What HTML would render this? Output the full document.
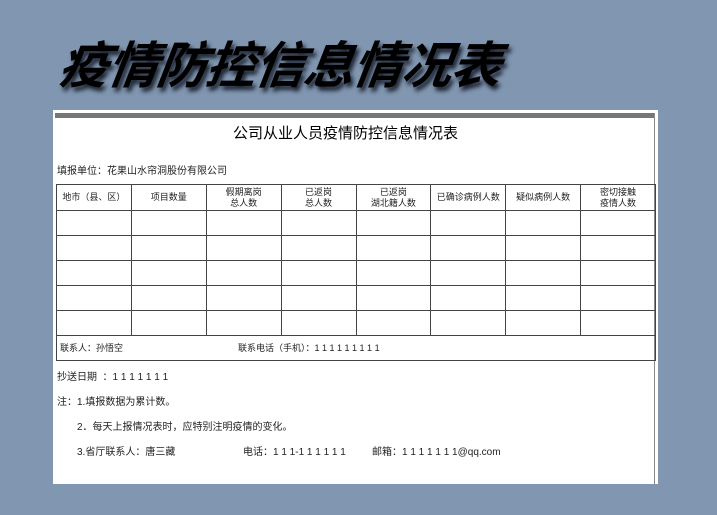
<!DOCTYPE html>
<html><head><meta charset="utf-8"><style>
body{margin:0;width:717px;height:515px;background:#8196b0;position:relative;overflow:hidden;font-family:"Liberation Sans","Noto Sans CJK SC",sans-serif;}
.t{position:absolute;left:60px;top:26px;font-size:50px;font-style:italic;font-weight:bold;color:#000;letter-spacing:-1px;text-shadow:3px 4px 4px #1a2230;transform:skewX(-8deg);}
.p{position:absolute;left:53px;top:110px;width:605px;height:374px;background:#fff;}
.bar{position:absolute;left:2px;top:3px;width:600px;height:5px;background:#777;}
.rl{position:absolute;left:601px;top:3px;width:1px;height:371px;background:#888;}
.a{position:absolute;font-size:10px;color:#222;white-space:nowrap;}
table{position:absolute;left:3px;top:74px;border-collapse:collapse;table-layout:fixed;width:600px;}
td{border:1px solid #444;height:24px;padding:0;text-align:center;font-size:9px;line-height:11px;color:#222;}
tr.h td{height:25px;}
td.w{text-align:left;padding-left:3px;}
</style></head><body>
<div class="t">疫情防控信息情况表</div>
<div class="p">
<div class="bar"></div><div class="rl"></div>
<div class="a" style="left:180px;top:12px;font-size:15px;color:#000">公司从业人员疫情防控信息情况表</div>
<div class="a" style="left:4px;top:52px">填报单位：花果山水帘洞股份有限公司</div>
<table>
<tr class="h"><td>地市（县、区）</td><td>项目数量</td><td>假期离岗<br>总人数</td><td>已返岗<br>总人数</td><td>已返岗<br>湖北籍人数</td><td>已确诊病例人数</td><td>疑似病例人数</td><td>密切接触<br>疫情人数</td></tr>
<tr><td></td><td></td><td></td><td></td><td></td><td></td><td></td><td></td></tr>
<tr><td></td><td></td><td></td><td></td><td></td><td></td><td></td><td></td></tr>
<tr><td></td><td></td><td></td><td></td><td></td><td></td><td></td><td></td></tr>
<tr><td></td><td></td><td></td><td></td><td></td><td></td><td></td><td></td></tr>
<tr><td></td><td></td><td></td><td></td><td></td><td></td><td></td><td></td></tr>
<tr><td colspan="8" class="w" style="height:24px">联系人：孙悟空<span style="display:inline-block;width:115px"></span>联系电话（手机）：1 1 1 1 1 1 1 1 1</td></tr>
</table>
<div class="a" style="left:4px;top:258px">抄送日期 &nbsp;：1 1 1 1 1 1 1</div>
<div class="a" style="left:4px;top:283px">注：1.填报数据为累计数。</div>
<div class="a" style="left:24px;top:308px">2．每天上报情况表时，应特别注明疫情的变化。</div>
<div class="a" style="left:24px;top:333px">3.省厅联系人：唐三藏</div>
<div class="a" style="left:190px;top:333px">电话：1 1 1-1 1 1 1 1 1</div>
<div class="a" style="left:319px;top:333px">邮箱：1 1 1 1 1 1 1@qq.com</div>
</div>
</body></html>
